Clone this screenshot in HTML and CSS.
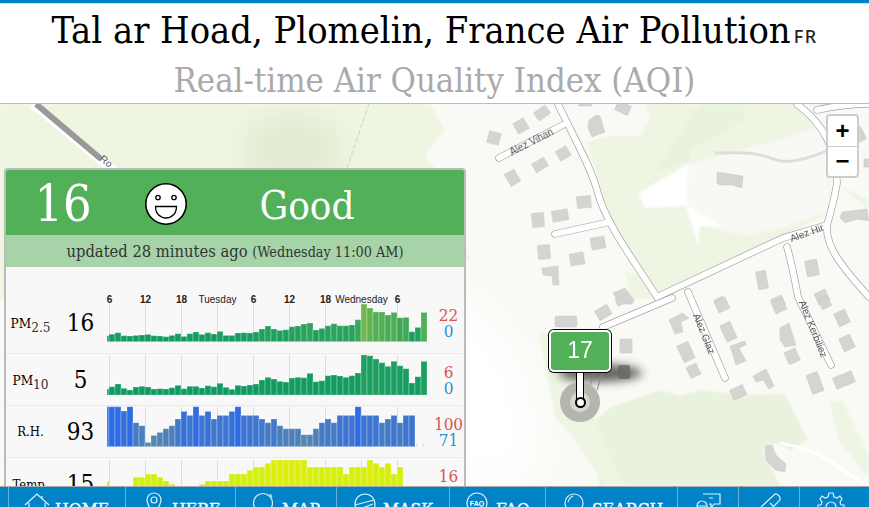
FILE: index.html
```html
<!DOCTYPE html>
<html lang="en">
<head>
<meta charset="utf-8">
<title>Tal ar Hoad, Plomelin, France Air Pollution</title>
<link rel="stylesheet" href="styles.css">
</head>
<body>
<div class="page">
  <header class="head">
    <h1 class="title">Tal ar Hoad, Plomelin, France Air Pollution<span class="cc">FR</span></h1>
    <h2 class="subtitle">Real-time Air Quality Index (AQI)</h2>
  </header>

  <main class="map">
    <svg class="basemap" viewBox="0 104 869 382" preserveAspectRatio="none" aria-hidden="true">
      <defs>
        <filter id="soft" x="-10%" y="-10%" width="120%" height="120%"><feGaussianBlur stdDeviation="1.2"/></filter>
        <filter id="crisp" x="-5%" y="-5%" width="110%" height="110%"><feGaussianBlur stdDeviation="0.4"/></filter>
        <filter id="softer" x="-30%" y="-30%" width="160%" height="160%"><feGaussianBlur stdDeviation="14"/></filter>
        <filter id="wide" x="-30%" y="-30%" width="160%" height="160%"><feGaussianBlur stdDeviation="22"/></filter>
        <filter id="shade" x="-30%" y="-60%" width="160%" height="220%"><feGaussianBlur stdDeviation="5"/></filter>
      </defs>
      <rect class="m-base" x="0" y="104" width="869" height="382"/>
      <path class="m-west" d="M0 104H430L445 130L425 155L440 175L470 260L0 300Z" filter="url(#soft)"/>
      <ellipse class="m-hill" cx="292" cy="150" rx="48" ry="34" filter="url(#softer)"/>
      <path class="m-white" d="M460 280L530 370L545 486H400L410 340Z" filter="url(#wide)"/>
      <g filter="url(#soft)">
        <path class="m-green" d="M645 104H800L830 130V212L783 238L657 297L620 240L603 200L587 142L610 136L640 136L650 120Z"/>
        <path class="m-green2" d="M700 104H745L744 120L690 150L690 160L655 172L690 120Z"/>
        <path class="m-green2" d="M590 425L610 408L640 397L662 390L680 396L700 390L742 395L785 394L800 425L808 440L790 450L780 443L762 447L780 486H600Z"/>
        <path class="m-green" d="M538 333L565 335L600 433L625 486H606L570 433L556 420Z"/>
        <path class="m-green" d="M625 272L640 275L657 297L632 300Z"/>
        <path class="m-green" d="M830 402L842 400L869 455V478L838 440Z"/>
        <path class="m-green" d="M805 104H840L825 112Z"/>
        <path class="m-green" d="M838 185L869 200V198L869 210L845 190Z"/>
        <path class="m-clear" d="M640 192L692 163L770 142L826 124L830 210L790 226L745 236L722 230L700 226L698 244L692 225L685 205L645 208L638 195Z"/>
        <path class="m-pure" d="M640 192L688 164L686 206L645 208Z"/>
        <path class="m-pure" d="M686 205L720 226L700 226L698 244L692 225Z"/>
      </g>

      <path class="r-track" d="M369 104L347 168"/>
      <path class="r-major-c" d="M33 104L115 172"/>
      <path class="r-major" d="M36 104L101 159"/>

      <g class="casing">
        <path d="M558 104C575 140 590 165 597 190C606 225 635 262 657 297L783 238L827 225C833 205 835 195 837 183C836 150 825 125 797 104"/>
        <path d="M563 125L499 158"/>
        <path d="M610 222L555 234"/>
        <path d="M817 110C835 106 850 104 869 104"/>
        <path d="M827 225C825 245 840 265 869 297"/>
        <path d="M688 292L725 378"/>
        <path d="M787 247C792 265 795 280 798 297L831 365"/>
        <path d="M603 327L672 298"/>
      </g>
      <g class="fill">
        <path d="M558 104C575 140 590 165 597 190C606 225 635 262 657 297L783 238L827 225C833 205 835 195 837 183C836 150 825 125 797 104"/>
        <path d="M563 125L499 158"/>
        <path d="M610 222L555 234"/>
        <path d="M817 110C835 106 850 104 869 104"/>
        <path d="M827 225C825 245 840 265 869 297"/>
        <path d="M688 292L725 378"/>
        <path d="M787 247C792 265 795 280 798 297L831 365"/>
        <path d="M603 327L672 298"/>
      </g>
      <path class="r-soft" d="M715 153C745 152 755 152 780 161C795 163 810 158 826 151"/>
      <path class="r-soft2" d="M780 443C805 448 825 455 840 468C850 475 860 482 869 486"/>

      <g class="bld" filter="url(#crisp)">
        <rect x="-6" y="-6" width="12" height="12" transform="translate(494 138) rotate(15)"/>
        <rect x="-6" y="-6" width="12" height="12" transform="translate(521 126) rotate(-30)"/>
        <rect x="-7" y="-5" width="14" height="10" transform="translate(542 113) rotate(-35)"/>
        <rect x="-5" y="-7" width="11" height="14" transform="translate(512 178) rotate(-30)"/>
        <rect x="-7" y="-5" width="14" height="10" transform="translate(540 165) rotate(-30)"/>
        <rect x="-6" y="-5" width="12" height="11" transform="translate(563 153) rotate(-30)"/>
        <rect x="-7" y="-6" width="14" height="12" transform="translate(584 202) rotate(-5)"/>
        <rect x="-8" y="-5" width="16" height="11" transform="translate(560 215) rotate(-10)"/>
        <rect x="-6" y="-7" width="12" height="14" transform="translate(538 220) rotate(-5)"/>
        <rect x="-6" y="-7" width="12" height="14" transform="translate(544 252) rotate(-5)"/>
        <rect x="-7" y="-6" width="14" height="12" transform="translate(577 259) rotate(-10)"/>
        <rect x="-7" y="-6" width="14" height="12" transform="translate(598 243) rotate(-10)"/>
        <path d="M542 268L558 266L559 285L553 285L552 276L543 275Z"/>
        <path d="M613 293L625 288L634 300L632 304H620Z"/>
        <path d="M589 120L596 115L600 116L605 132L592 137L588 128Z"/>
        <rect x="-7" y="-5" width="14" height="10" transform="translate(623 108) rotate(25)"/>
        <rect x="-6" y="-3" width="13" height="6" transform="translate(585 103)"/>
        <path d="M717 172L743 176L742 188L732 185L720 185L717 183Z"/>
        <path d="M842 212L867 209L869 221L858 219L845 223L840 218Z"/>
        <rect x="-6" y="-8" width="12" height="16" transform="translate(812 268) rotate(-10)"/>
        <rect x="-5" y="-9" width="10" height="18" transform="translate(762 280) rotate(-10)"/>
        <rect x="-6" y="-6" width="12" height="12" transform="translate(822 297) rotate(-25)"/>
        <rect x="-5" y="-4" width="10" height="8" transform="translate(720 302) rotate(-25)"/>
        <rect x="-6" y="-5" width="12" height="10" transform="translate(778 302) rotate(-25)"/>
        <rect x="-6" y="-7" width="12" height="14" transform="translate(858 135) rotate(-25)"/>
        <rect x="-5" y="-4" width="10" height="8" transform="translate(869 163)"/>
        <rect x="-11" y="-5" width="22" height="11" rx="2" transform="translate(566 321)"/>
        <rect x="-7" y="-5" width="14" height="11" transform="translate(603 312) rotate(-30)"/>
        <rect x="-7" y="-4" width="14" height="8" transform="translate(623 300) rotate(-20)"/>
        <rect x="-6" y="-7" width="12" height="14" transform="translate(626 346)"/>
        <path d="M669 320L682 313L689 318L681 322L683 332L675 334Z"/>
        <rect x="-6" y="-9" width="12" height="18" transform="translate(686 352) rotate(-25)"/>
        <rect x="-5" y="-6" width="11" height="12" transform="translate(693 371) rotate(-25)"/>
        <rect x="-6" y="-6" width="12" height="12" transform="translate(722 305) rotate(-25)"/>
        <rect x="-5" y="-9" width="11" height="18" transform="translate(728 332) rotate(-25)"/>
        <path d="M730 346L745 341L746 345L739 348L746 361L736 365Z"/>
        <path d="M753 376L766 369L774 386L769 389L763 380L756 382Z"/>
        <rect x="-7" y="-5" width="14" height="11" transform="translate(738 392) rotate(-25)"/>
        <rect x="-6" y="-6" width="12" height="12" transform="translate(779 306) rotate(-25)"/>
        <path d="M780 328L789 323L796 345L785 347L780 340Z"/>
        <rect x="-6" y="-6" width="12" height="13" transform="translate(792 356) rotate(-25)"/>
        <rect x="-6" y="-10" width="12" height="20" transform="translate(815 383) rotate(-20)"/>
        <rect x="-10" y="-6" width="20" height="12" transform="translate(844 380) rotate(-22)"/>
        <rect x="-6" y="-7" width="12" height="14" transform="translate(842 318) rotate(-25)"/>
        <rect x="-6" y="-7" width="12" height="14" transform="translate(847 343) rotate(-25)"/>
        <rect x="-5" y="-5" width="10" height="10" transform="translate(825 303) rotate(-25)"/>
        <path d="M765 446L772 445L776 455L786 464L785 472L775 470L766 460Z"/>
      </g>

      <ellipse class="m-shadow" cx="600" cy="373" rx="42" ry="9" filter="url(#shade)"/>
      <rect class="bld-dark" x="618" y="365" width="12" height="14" rx="2"/>
      <path class="r-drive" d="M590 385L603 350M597 390L610 350"/>

      <text class="m-label" transform="translate(533 145) rotate(-27)">Alez Vihan</text>
      <text class="m-label" transform="translate(808 236) rotate(-20)">Alez Hir</text>
      <text class="m-label" transform="translate(701 335) rotate(68)">Alez Glaz</text>
      <text class="m-label" transform="translate(810 330) rotate(68)">Alez Kerbiliez</text>
      <text class="m-label" transform="translate(104 164) rotate(38)">Ro</text>
    </svg>

    <div class="zoomctl">
      <div class="zoombtn">+</div>
      <div class="zoombtn zoombtn-minus">&#8722;</div>
    </div>

    <div class="pin">
      <div class="pin-ring"><div class="pin-ring-inner"></div></div>
      <div class="pin-stem"></div>
      <div class="pin-dot"></div>
      <div class="pin-box">17</div>
    </div>

    <section class="panel">
      <div class="p-head">
        <div class="p-aqi">16</div>
        <svg class="p-face" viewBox="0 0 44 44" aria-hidden="true">
          <circle cx="22" cy="22" r="20.2" fill="#fff" stroke="#000" stroke-width="1.6"/>
          <circle cx="14" cy="15.5" r="2.2" fill="none" stroke="#000" stroke-width="1.3"/>
          <circle cx="30" cy="15.5" r="2.2" fill="none" stroke="#000" stroke-width="1.3"/>
          <path d="M11.5 24.5H32.5C32.5 32 27.5 36 22 36S11.5 32 11.5 24.5Z" fill="#fff" stroke="#000" stroke-width="1.3"/>
        </svg>
        <div class="p-status">Good</div>
      </div>
      <div class="p-band">updated 28 minutes ago <small class="p-when">(Wednesday 11:00 AM)</small></div>

      <div class="row row-first">
        <div class="r-name">PM<sub>2.5</sub></div>
        <div class="r-val">16</div>
        <svg class="chart chart-first" data-series="pm25" data-base="49.7" data-top="12" width="324" height="61"></svg>
        <div class="r-range"><span class="hi">22</span><span class="lo">0</span></div>
      </div>
      <div class="row">
        <div class="r-name">PM<sub>10</sub></div>
        <div class="r-val">5</div>
        <svg class="chart" data-series="pm10" data-base="41" data-top="1" width="324" height="51"></svg>
        <div class="r-range"><span class="hi">6</span><span class="lo">0</span></div>
      </div>
      <div class="row">
        <div class="r-name r-name-sm">R.H.</div>
        <div class="r-val">93</div>
        <svg class="chart" data-series="rh" data-base="40.7" data-top="1" width="324" height="51"></svg>
        <div class="r-range"><span class="hi">100</span><span class="lo">71</span></div>
      </div>
      <div class="row row-last">
        <div class="r-name r-name-sm">Temp.</div>
        <div class="r-val">15</div>
        <svg class="chart" data-series="temp" data-base="40.3" data-top="1" width="324" height="51"></svg>
        <div class="r-range"><span class="hi">16</span><span class="lo">9</span></div>
      </div>
    </section>
  </main>

  <nav class="nav">
    <div class="nav-spacer"></div>
    <a class="nav-item">
      <svg class="ico" viewBox="0 0 26 24"><path d="M1 13L13 2L25 13M5 11V24M21 11V24M18 4V7"/></svg>
      <span>HOME</span>
    </a>
    <a class="nav-item">
      <svg class="ico" viewBox="0 0 26 24"><path d="M13 1C8 1 6 5 6 8C6 12 10 18 13 24C16 18 20 12 20 8C20 5 18 1 13 1Z"/><circle cx="13" cy="8" r="3"/></svg>
      <span>HERE</span>
    </a>
    <a class="nav-item">
      <svg class="ico" viewBox="0 0 26 24"><circle cx="12" cy="11" r="9.5"/><path d="M19 2L21 5"/></svg>
      <span>MAP</span>
    </a>
    <a class="nav-item">
      <svg class="ico" viewBox="0 0 26 24"><circle cx="13" cy="12" r="10"/><path d="M3 13L22 8M5 18L21 12"/></svg>
      <span>MASK</span>
    </a>
    <a class="nav-item">
      <svg class="ico" viewBox="0 0 26 24"><circle cx="12" cy="11" r="10"/><text class="ico-text" x="12" y="14">FAQ</text><path class="ico-solid" d="M20 17L26 24H18Z"/></svg>
      <span>FAQ</span>
    </a>
    <a class="nav-item">
      <svg class="ico" viewBox="0 0 26 24"><circle cx="13" cy="11" r="9"/><path d="M7 10C8 6 10 5 12 4"/></svg>
      <span>SEARCH</span>
    </a>
    <a class="nav-item nav-item-icon">
      <svg class="ico" viewBox="0 0 26 24"><path d="M7 2H24V12H18L15 16V12H13"/><circle cx="6" cy="14" r="5"/><path d="M1 14H11M13 6H17M1 24C1 20 11 20 11 24"/></svg>
    </a>
    <a class="nav-item nav-item-icon">
      <svg class="ico" viewBox="0 0 26 24"><path d="M18 2C20 1 24 5 23 8L10 21C8 22 3 18 4 15Z"/><path d="M13 11L16 14"/></svg>
    </a>
    <a class="nav-item nav-item-icon">
      <svg class="ico" viewBox="0 0 26 24"><path d="M11 1H15L16 5L19 6L22 4L24 7L22 10L23 13H26V17H23L22 20L24 23H2L4 20L3 17H0V13H3L4 10L2 7L4 4L7 6L10 5Z"/><circle cx="13" cy="15" r="5"/></svg>
    </a>
  </nav>
</div>
<script src="charts.js"></script>
</body>
</html>
```
FILE: styles.css
```css
* { box-sizing: border-box; }
html, body { margin: 0; height: 100%; overflow: hidden; }
body { background: #fff; font-family: "DejaVu Serif Condensed", "DejaVu Serif", serif; }

.page { display: flex; flex-direction: column; height: 507px; overflow: hidden; }

.head {
  height: 104px;
  flex: none;
  border-top: 3px solid #0084c7;
  border-bottom: 1px solid #bbb;
  background: #fff;
  text-align: center;
  box-shadow: inset 0 1px 0 #ddd;
}
.title { margin: 5px 0 0; font-size: 37.7px; line-height: 45px; font-weight: 400; color: #000; white-space: nowrap; }
.cc { font-size: 18px; letter-spacing: 1.5px; color: #222; margin-left: 3px; font-family: "Noto Sans", sans-serif; font-weight: 500; }
.subtitle { margin: -1px 0 0; font-size: 34.4px; line-height: 44px; font-weight: 400; color: #aaa; }

.map { position: relative; flex: 1; min-height: 0; overflow: hidden; background: #f9faf6; }
.basemap { position: absolute; inset: 0; width: 100%; height: 100%; display: block; }

.m-base { fill: #f9faf5; }
.m-west { fill: #eef5e1; }
.m-hill { fill: #dfe6cc; opacity: .75; }
.m-white { fill: #ffffff; }
.m-green { fill: #eef5e3; }
.m-green2 { fill: #e9f2dd; }
.m-clear { fill: #f8f8f4; }
.m-pure { fill: #ffffff; }
.m-shadow { fill: #333; opacity: .75; }

.r-track { fill: none; stroke: #b6dccb; stroke-width: 1; stroke-dasharray: 5 2; }
.r-major-c { fill: none; stroke: #fff; stroke-width: 9; }
.r-major { fill: none; stroke: #999; stroke-width: 6; }
.casing path { fill: none; stroke: #a5a5a5; stroke-width: 7.4; stroke-linecap: round; }
.fill path { fill: none; stroke: #fff; stroke-width: 6; stroke-linecap: round; }
.r-soft { fill: none; stroke: #ddd; stroke-width: 3; }
.r-soft2 { fill: none; stroke: #fff; stroke-width: 3; }
.r-drive { fill: none; stroke: #888; stroke-width: 1; }
.bld rect, .bld path { fill: #d4d4d2; stroke: #c8c8c6; stroke-width: .5; }
.bld-dark { fill: #666; opacity: .8; }
.m-label { font: 10px "Liberation Sans", sans-serif; fill: #555; text-anchor: middle; }

.zoomctl {
  position: absolute;
  left: 826px;
  top: 10px;
  width: 33px;
  height: 64px;
  background: #fff;
  border: 2px solid #ccc;
  border-radius: 4px;
  display: flex;
  flex-direction: column;
}
.zoombtn {
  flex: 1;
  display: flex;
  align-items: center;
  justify-content: center;
  font: 700 24px/1 "Liberation Sans", sans-serif;
  color: #000;
}
.zoombtn-minus { border-top: 1px solid #ccc; }

.pin { position: absolute; left: 549px; top: 226px; width: 62px; height: 104px; }
.pin-ring {
  position: absolute; left: 11px; top: 52px; width: 40px; height: 40px; border-radius: 50%;
  background: #b4b6ad; display: flex; align-items: center; justify-content: center;
}
.pin-ring-inner { width: 20px; height: 20px; border-radius: 50%; background: #d5d8cd; }
.pin-stem { position: absolute; left: 27px; top: 40px; width: 8px; height: 32px; background: #fff; border: 1.5px solid #000; border-width: 0 1.5px; }
.pin-dot { position: absolute; left: 25.5px; top: 66.5px; width: 11px; height: 11px; border-radius: 50%; background: #fff; border: 2px solid #000; }
.pin-box {
  position: absolute; left: 0; top: 0; width: 62px; height: 42px;
  background: #52b058;
  border-radius: 5px;
  box-shadow: inset 0 0 0 2px #fff, 0 0 0 1px #000;
  color: #fff;
  font: 400 23px/41px "Liberation Sans", sans-serif;
  text-align: center;
}

.panel {
  position: absolute;
  left: 4px;
  top: 64px;
  width: 462px;
  height: 340px;
  background: #f8f8f8;
  border: 2px solid #bbb;
  border-bottom: 0;
  border-radius: 4px 4px 0 0;
  overflow: hidden;
}
.p-head {
  height: 65px;
  background: #52b058;
  color: #fff;
  display: grid;
  grid-template-columns: 108px 104px 1fr;
  align-items: center;
  justify-items: center;
}
.p-aqi { font-size: 50px; line-height: 65px; padding-left: 6px; }
.p-face { width: 44px; height: 44px; }
.p-status { font-size: 40px; line-height: 65px; padding: 3px 68px 0 0; }
.p-band {
  height: 32px;
  background: #a6d4a8;
  color: #333;
  font-size: 16.4px;
  line-height: 33px;
  text-align: center;
}
.p-when { font-size: 14.3px; }

.row {
  display: grid;
  grid-template-columns: 47px 53px 324px 35px;
  align-items: center;
  height: 52px;
  margin: 0 1px 0 0;
  padding-left: 1px;
  border-bottom: 1px solid #e9e9e9;
  color: #000;
}
.row-first { height: 86px; padding-top: 24px; margin-top: 1px; }
.row-last { border-bottom: 0; }
.r-name { font-size: 13.5px; text-align: center; }
.r-name sub { font-size: 13.5px; line-height: 0; color: #333; }
.r-name-sm { font-size: 13px; }
.r-val { font-size: 24px; text-align: center; }
.chart { display: block; overflow: visible; }
.r-range { display: flex; flex-direction: column; align-items: center; font-size: 17px; line-height: 16px; }
.hi { color: #d9534f; }
.lo { color: #2b8fd3; }

.grid-line { stroke: #dcdcdc; stroke-width: 1; }
.tick { font: 10px "Liberation Sans", sans-serif; fill: #222; text-anchor: middle; }
.tick-num { font-weight: 700; }
.bar { stroke: rgba(255,255,255,.28); stroke-width: 1; }
.bar-nil { fill: #ddd; }

.nav {
  flex: none;
  height: 21px;
  background: #0084c7;
  border-top: 1px solid #aaa;
  display: grid;
  grid-template-columns: 8px 117px 110px 101px 113px 96px 132px 61px 61px 70px;
  overflow: hidden;
  color: #fff;
}
.nav-item {
  display: flex;
  align-items: flex-start;
  gap: 5px;
  padding: 5px 0 0 15px;
  border-left: 1px solid #6ab3dd;
  font-size: 17.5px;
  font-weight: 400;
  -webkit-text-stroke: .3px #fff;
  line-height: 24px;
  height: 40px;
}
.nav-item-icon { padding-left: 18px; }
.nav-item span { position: relative; top: 5px; }
.ico { width: 26px; height: 24px; fill: none; stroke: #dff0fa; stroke-width: 1.2; flex: none; overflow: visible; }
.ico-text { font: 700 7px "Liberation Sans", sans-serif; fill: #fff; stroke: none; text-anchor: middle; }
.ico-solid { fill: #fff; stroke: none; }
```
FILE: charts.js
```js
var SERIES = {
  pm25: { head: 6, c0: [14, 154, 98], c1: [116, 184, 78], max: 38, h: [7.5,9,6,5.7,6.3,6.7,7.3,6,5.7,5,6.3,8,5.3,8,9.7,7.3,9,7.7,10.3,6.3,6.3,8.7,9,8.7,9.7,12.7,15.7,12.7,11.3,12,15,15.7,17.7,18.7,11.7,13.3,16,18,16,16,16.7,22,37.7,33.7,29.7,29.7,26.7,29.3,24,24.3,10,14.3,29.3] },
  pm10: { head: 6, c0: [14, 154, 98], c1: [30, 160, 95], max: 40, h: [8.3,11,6.7,5,8,8.7,8,6,6.3,6,7.3,9.7,6.3,8.7,8.7,7,9.3,8.3,11.7,7.7,5.7,9.7,9,10,11,15,17.7,16,13.7,13,17,17.7,17.3,21.7,13.3,14.3,19.3,20,19,17.7,19.3,22,40,39.3,36,32.3,28.7,33.7,29.3,26.3,12,18.3,33.7] },
  rh: { head: 40, c0: [92, 138, 168], c1: [46, 107, 228], max: 40, tail: 2, h: [40,40,35.7,40,24,21,4.3,11.3,14.3,18,21,27.7,35.3,31.3,40,31.3,35.3,27.7,31.3,31.3,35.3,40,31.3,31.3,31.3,27.7,24,27.7,21,18,18,18,12,12,18,24,27.7,24,31.3,31.3,31.3,40,31.3,31.3,31.3,24,27.7,31.3,24,31.3,31.3] },
  temp: { head: 18, c0: [200, 240, 16], c1: [220, 238, 12], max: 40, h: [0,0,0,0,22,22,25.3,25.3,22,18.3,15,0,0,0,0,15,18.3,18.3,18.3,18.3,25.3,25.3,25.3,29,32.3,32.3,36,39.3,39.3,39.3,39.3,39.3,39.3,32.3,32.3,32.3,32.3,32.3,32.3,25.3,32.3,32.3,32.3,39.3,36,32.3,36,25.3,32.3] }
};
var NS = "http://www.w3.org/2000/svg";
var TICKS = [["6",1],["12",1],["18",1],["Tuesday",0],["6",1],["12",1],["18",1],["Wednesday",0],["6",1]];

function el(svg, name, attrs, text) {
  var node = document.createElementNS(NS, name);
  for (var key in attrs) node.setAttribute(key, attrs[key]);
  if (text) node.textContent = text;
  svg.appendChild(node);
}
function mix(a, b, t) {
  return "rgb(" + [0, 1, 2].map(function (i) { return Math.round(a[i] + (b[i] - a[i]) * t); }).join(",") + ")";
}

document.querySelectorAll(".chart").forEach(function (svg) {
  var s = SERIES[svg.dataset.series];
  var base = +svg.dataset.base, top = +svg.dataset.top;
  TICKS.forEach(function (t, i) {
    var x = 2.5 + i * 36;
    el(svg, "line", { "class": "grid-line", x1: x, x2: x, y1: top, y2: base });
  });
  function bar(x, w, h) {
    if (h > 0) el(svg, "rect", { "class": "bar", x: x, y: base - h, width: w, height: h, fill: mix(s.c0, s.c1, Math.pow(Math.min(h / s.max, 1), 1.6)) });
  }
  bar(0, 2, s.head);
  s.h.forEach(function (h, i) { bar(2 + i * 6, 6, h); });
  for (var k = 0; k < (s.tail || 0); k++) {
    el(svg, "rect", { "class": "bar-nil", x: 2 + (s.h.length + k) * 6 + 1, y: base - 3, width: 1.5, height: 3 });
  }
  if (svg.classList.contains("chart-first")) {
    TICKS.forEach(function (t, i) {
      el(svg, "text", { "class": "tick" + (t[1] ? " tick-num" : ""), x: 2.5 + i * 36, y: 11 }, t[0]);
    });
  }
});
```
